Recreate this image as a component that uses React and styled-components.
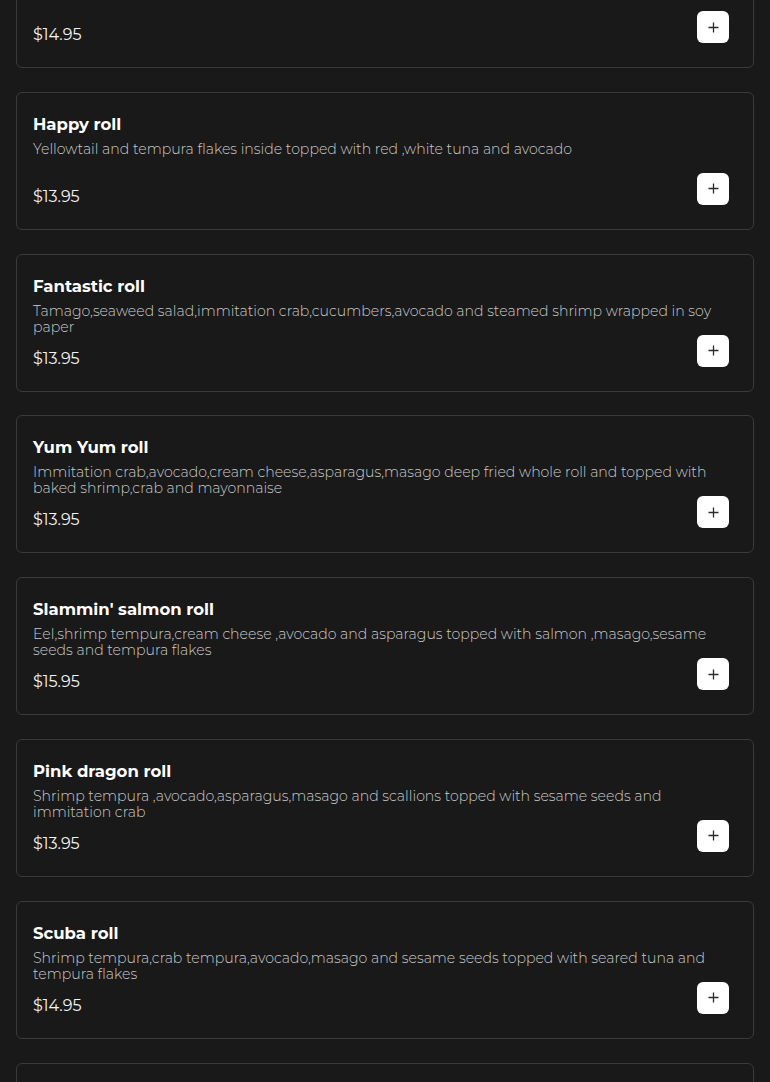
import React from 'react'
import styled, { createGlobalStyle } from 'styled-components'

const items = [
    { name: 'Rainbow roll', desc: 'Crab and cucumber inside topped with tuna,salmon,yellowtail,white fish and avocado', price: '14.95' },
    { name: 'Happy roll', desc: 'Yellowtail and tempura flakes inside topped with red ,white tuna and avocado', price: '13.95' },
    { name: 'Fantastic roll', desc: 'Tamago,seaweed salad,immitation crab,cucumbers,avocado and steamed shrimp wrapped in soy paper', price: '13.95' },
    { name: 'Yum Yum roll', desc: 'Immitation crab,avocado,cream cheese,asparagus,masago deep fried whole roll and topped with baked shrimp,crab and mayonnaise', price: '13.95' },
    { name: "Slammin' salmon roll", desc: 'Eel,shrimp tempura,cream cheese ,avocado and asparagus topped with salmon ,masago,sesame seeds and tempura flakes', price: '15.95' },
    { name: 'Pink dragon roll', desc: 'Shrimp tempura ,avocado,asparagus,masago and scallions topped with sesame seeds and immitation crab', price: '13.95' },
    { name: 'Scuba roll', desc: 'Shrimp tempura,crab tempura,avocado,masago and sesame seeds topped with seared tuna and tempura flakes', price: '14.95' },
    { name: 'Dragon roll', desc: 'Shrimp tempura and cucumber inside topped with eel and avocado', price: '13.95' },
]

const App = () => {
    return (
        <>
            <GlobalStyle />
            <Menu>
                {items.map((item) => (
                    <Card key={item.name}>
                        <Title>{item.name}</Title>
                        <Desc>{item.desc}</Desc>
                        <Bottom>
                            <Price>${item.price}</Price>
                            <AddBtn aria-label="add">
                                <svg width="11" height="11" viewBox="0 0 11 11">
                                    <path d="M5.5 0.5v10M0.5 5.5h10" stroke="#2a2a2a" strokeWidth="1.3" fill="none" />
                                </svg>
                            </AddBtn>
                        </Bottom>
                    </Card>
                ))}
            </Menu>
        </>
    )
}

export default App

const GlobalStyle = createGlobalStyle`
    html, body{
        margin: 0;
        padding: 0;
        background-color: #191919;
        overflow: hidden;
    }
    body{
        font-family: Montserrat, 'Noto Sans', sans-serif;
    }
`

const Menu = styled.div`
    display: flex;
    flex-direction: column;
    gap: 23.8px;
    padding: 0 16px;
    margin-top: -70px;
`

const Card = styled.div`
    border: 1px solid #3a3a3a;
    border-radius: 6px;
    padding: 18px 24px 24px 16px;
    display: flex;
    flex-direction: column;
`

const Title = styled.div`
    color: #fff;
    font-size: 16.5px;
    font-weight: 700;
    line-height: 26px;
    margin-bottom: 4px;
`

const Desc = styled.div`
    color: #cacaca;
    font-size: 14.1px;
    font-weight: 300;
    line-height: 16px;
    min-height: 32px;
`

const Bottom = styled.div`
    display: flex;
    justify-content: space-between;
    align-items: flex-end;
`

const Price = styled.div`
    color: #f4f4f4;
    font-size: 16px;
    line-height: 16px;
`

const AddBtn = styled.button`
    width: 32px;
    height: 32px;
    border: none;
    border-radius: 6px;
    background-color: #fff;
    display: flex;
    align-items: center;
    justify-content: center;
    padding: 0;
    cursor: pointer;
`
